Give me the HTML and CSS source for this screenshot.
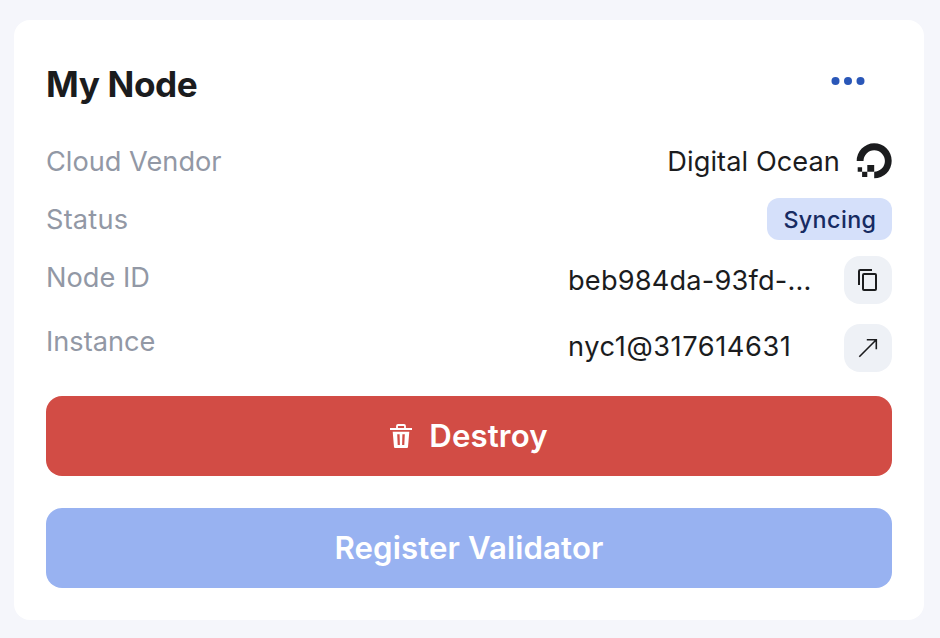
FILE: index.html
```html
<!DOCTYPE html>
<html lang="en">
<head>
<meta charset="utf-8">
<title>My Node</title>
<link rel="stylesheet" href="styles.css">
</head>
<body>
<main class="card">
  <header class="card-header">
    <h1 class="title">My Node</h1>
    <button class="menu" aria-label="More options">
      <svg width="34" height="10" viewBox="0 0 34 10"><circle cx="4.5" cy="5" r="4"/><circle cx="17" cy="5" r="4"/><circle cx="29.5" cy="5" r="4"/></svg>
    </button>
  </header>
  <dl class="details">
    <div class="row">
      <dt class="label">Cloud Vendor</dt>
      <dd class="value vendor">
        <span class="vendor-name">Digital Ocean</span>
        <svg width="36" height="36" viewBox="0 0 36 36" fill="#1b1c1e"><path d="M.7 18A17.5 17.5 0 1 1 18.2 35.3V28.7A10.7 10.7 0 1 0 7.5 18Z"/><path d="M11.3 22h6.9v6.7h-6.9zM6.1 28.7h5.2v5.2H6.1zM1.7 24.2h4.4v4.5H1.7z"/></svg>
      </dd>
    </div>
    <div class="row">
      <dt class="label status-label">Status</dt>
      <dd class="value"><span class="badge">Syncing</span></dd>
    </div>
    <div class="row node-row">
      <dt class="label">Node ID</dt>
      <dd class="value">
        <span class="text node-id">beb984da-93fd-...</span>
        <button class="icon-button" aria-label="Copy">
          <svg width="24" height="24" viewBox="0 0 24 24" fill="none" stroke="#1b1c1e" stroke-width="2"><rect x="7" y="6" width="13" height="16" rx="1"/><path d="M3 17V3.2Q3 2 4.2 2H16"/></svg>
        </button>
      </dd>
    </div>
    <div class="row instance-row">
      <dt class="label">Instance</dt>
      <dd class="value">
        <span class="text instance">nyc1@317614631</span>
        <button class="icon-button" aria-label="Open">
          <svg width="24" height="24" viewBox="0 0 24 24" fill="none" stroke="#1b1c1e" stroke-width="1.6"><path d="M3.3 20.7 20 4M10.8 3.8H20.3V13.2"/></svg>
        </button>
      </dd>
    </div>
  </dl>
  <div class="actions">
    <button class="button destroy">
      <svg width="22" height="24" viewBox="0 0 22 24"><path d="M7 4V2Q7 1 8 1H14Q15 1 15 2V4" fill="none" stroke="#fff" stroke-width="1.8"/><path fill="#fff" d="M0 4h22v2H0z"/><path fill="#fff" fill-rule="evenodd" d="M2.7 7.7H19.3L18 23Q17.9 24 17 24H5Q4.1 24 4 23ZM7.2 10.2 7.7 21H9.9L9.6 10.2ZM12.4 10.2 12.1 21H14.3L14.8 10.2Z"/></svg>
      <span class="button-text">Destroy</span>
    </button>
    <button class="button register"><span class="button-text">Register Validator</span></button>
  </div>
</main>
</body>
</html>
```
FILE: styles.css
```css
* { box-sizing: border-box; }
body {
  margin: 0;
  padding: 20px 16px 18px 14px;
  height: 638px;
  background: #f5f6fb;
  font-family: Inter, "Liberation Sans", sans-serif;
  color: #1b1c1e;
}
button { padding: 0; border: 0; background: none; font: inherit; }
svg { display: block; flex: none; }
.card {
  height: 600px;
  padding: 32px;
  background: #fff;
  border-radius: 16px;
}
.card-header {
  display: flex;
  justify-content: space-between;
  height: 88px;
  padding-right: 27px;
}
.title { margin: 0; font-size: 35.2px; font-weight: 700; line-height: 65px; letter-spacing: -0.4px; }
.menu { height: 58px; display: flex; align-items: center; }
.menu svg { fill: #2a57b8; }
.details { margin: 0; display: flex; flex-direction: column; gap: 16px; }
.row {
  display: flex;
  justify-content: space-between;
  align-items: flex-start;
  height: 42px;
  font-size: 27.2px;
  line-height: 42px;
}
.node-row { height: 48px; }
.instance-row { height: 52px; }
.label { color: #9298a5; line-height: 43px; }
.status-label { letter-spacing: 0.2px; }
.value { margin: 0; display: flex; align-items: center; }
.vendor { height: 42px; gap: 16px; }
.vendor-name { padding-top: 2px; line-height: 42px; letter-spacing: 0.07px; }
.badge {
  height: 42px;
  padding: 0 15.6px 0 16px;
  border-radius: 12px;
  background: #d5e0fa;
  color: #172b62;
  font-size: 23.3px;
  font-weight: 500;
  line-height: 43px;
  letter-spacing: 0.4px;
}
.text { width: 276px; white-space: nowrap; line-height: 44px; }
.node-id { padding-top: 2px; letter-spacing: 0.19px; }
.instance { letter-spacing: 0.58px; }
.icon-button {
  width: 48px;
  height: 48px;
  border-radius: 16px;
  background: #eef1f6;
  display: flex;
  align-items: center;
  justify-content: center;
}
.instance-row .value { height: 52px; align-items: flex-end; }
.instance-row .text { height: 47px; }
.actions { margin-top: 24px; display: flex; flex-direction: column; gap: 32px; }
.button {
  height: 80px;
  border-radius: 16px;
  color: #fff;
  font-size: 31.2px;
  font-weight: 600;
  display: flex;
  align-items: center;
  justify-content: center;
  gap: 17px;
}
.button-text { letter-spacing: 0.1px; }
.destroy { background: #d24c45; }
.register { background: #98b2f1; }
```
